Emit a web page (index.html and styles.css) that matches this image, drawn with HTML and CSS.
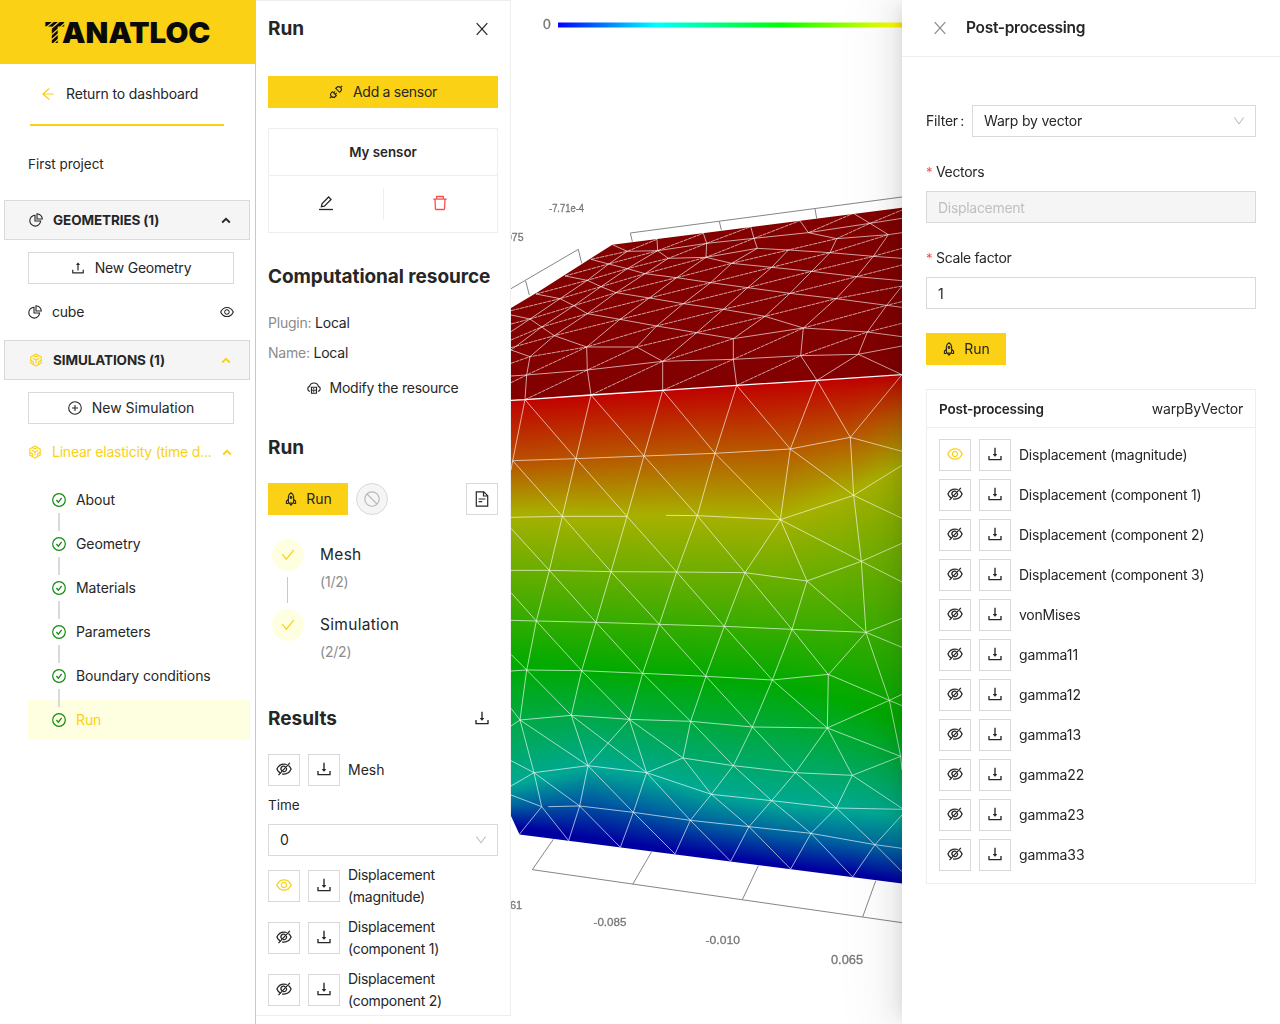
FILE: index.html
```html
<!DOCTYPE html>
<html lang="en">
<head>
<meta charset="utf-8">
<title>Tanatloc</title>
<link rel="stylesheet" href="styles.css">
</head>
<body>
<svg class="defs" aria-hidden="true">
  <symbol id="arrow-left" viewBox="64 64 896 896"><path d="M872 474H286.9l350.2-304c5.6-4.9 2.2-14-5.2-14h-88.5c-3.9 0-7.6 1.4-10.5 3.9L155 487.8a31.96 31.96 0 000 48.3L535.1 866c1.5 1.3 3.3 2 5.2 2h91.5c7.4 0 10.8-9.2 5.2-14L286.9 550H872c4.4 0 8-3.6 8-8v-60c0-4.4-3.6-8-8-8z"/></symbol>
  <symbol id="down" viewBox="64 64 896 896"><path d="M884 256h-75c-5.1 0-9.9 2.5-12.9 6.6L512 654.2 227.9 262.6c-3-4.1-7.8-6.6-12.9-6.6h-75c-6.5 0-10.3 7.4-6.5 12.7l352.6 486.1c12.8 17.6 39 17.6 51.7 0l352.6-486.1c3.9-5.3.1-12.7-6.4-12.7z"/></symbol>
  <symbol id="check" viewBox="64 64 896 896"><path d="M912 190h-69.9c-9.8 0-19.1 4.5-25.1 12.2L404.7 724.5 207 474a32 32 0 00-25.1-12.2H112c-6.7 0-10.4 7.7-6.3 12.9l273.9 347c12.8 16.2 37.4 16.2 50.3 0l488.4-618.9c4.1-5.1.4-12.8-6.3-12.8z"/></symbol>
  <symbol id="delete" viewBox="64 64 896 896"><path d="M360 184h-8c4.4 0 8-3.6 8-8v8h304v-8c0 4.4 3.6 8 8 8h-8v72h72v-80c0-35.3-28.7-64-64-64H352c-35.3 0-64 28.7-64 64v80h72v-72zm504 72H160c-17.7 0-32 14.3-32 32v32c0 4.4 3.6 8 8 8h60.4l24.7 523c1.6 34.1 29.8 61 63.9 61h454c34.2 0 62.3-26.8 63.9-61l24.7-523H888c4.4 0 8-3.6 8-8v-32c0-17.7-14.3-32-32-32zM731.3 840H292.7l-24.2-512h487l-24.2 512z"/></symbol>
  <symbol id="eye" viewBox="64 64 896 896"><path d="M942.2 486.2C847.4 286.5 704.1 186 512 186c-192.2 0-335.4 100.5-430.2 300.3a60.3 60.3 0 000 51.5C176.6 737.5 319.9 838 512 838c192.2 0 335.4-100.5 430.2-300.3 7.7-16.2 7.7-35 0-51.5zM512 766c-161.3 0-279.4-81.8-362.7-254C232.6 339.8 350.7 258 512 258c161.3 0 279.4 81.8 362.7 254C791.5 684.2 673.4 766 512 766zm-4-430c-97.2 0-176 78.8-176 176s78.8 176 176 176 176-78.8 176-176-78.8-176-176-176zm0 288c-61.9 0-112-50.1-112-112s50.1-112 112-112 112 50.1 112 112-50.1 112-112 112z"/></symbol>
  <symbol id="eye-off" viewBox="0 0 16 16"><g fill="none" stroke="currentColor" stroke-width="1.250"><path d="M4.600 12.100C2.900 11.300 1.600 9.900.9 8 2.300 4.700 4.800 3 8 3q1.500 0 2.800.5M12.500 4.400Q14.200 5.700 15.100 8C13.700 11.300 11.200 13 8 13q-1 0-1.900-.2"/><path d="M5.900 9.700A2.600 2.600 0 0 1 9.300 5.700M10.400 7A2.600 2.600 0 0 1 7 10.400M2.500 14.200L13.900 1.800"/></g></symbol>
  <symbol id="download" viewBox="64 64 896 896"><path d="M505.7 661a8 8 0 0012.6 0l112-141.7c4.1-5.2.4-12.9-6.3-12.9h-74.1V168c0-4.4-3.6-8-8-8h-60c-4.4 0-8 3.6-8 8v338.3H400c-6.7 0-10.4 7.7-6.3 12.9l112 141.8zM878 626h-60c-4.4 0-8 3.6-8 8v154H214V634c0-4.4-3.6-8-8-8h-60c-4.4 0-8 3.6-8 8v198c0 17.7 14.3 32 32 32h684c17.7 0 32-14.3 32-32V634c0-4.4-3.6-8-8-8z"/></symbol>
  <symbol id="upload" viewBox="64 64 896 896"><path d="M400 317.7h73.9V656c0 4.4 3.6 8 8 8h60c4.4 0 8-3.6 8-8V317.7H624c6.7 0 10.4-7.7 6.3-12.9L518.3 163a8 8 0 00-12.6 0l-112 141.7c-4.1 5.3-.4 13 6.3 13zM878 626h-60c-4.4 0-8 3.6-8 8v154H214V634c0-4.4-3.6-8-8-8h-60c-4.4 0-8 3.6-8 8v198c0 17.7 14.3 32 32 32h684c17.7 0 32-14.3 32-32V634c0-4.4-3.6-8-8-8z"/></symbol>
  <symbol id="pie" viewBox="0 0 14 14"><g fill="none" stroke="currentColor" stroke-width="1.1"><path d="M6 2.3A5.4 5.4 0 1 0 11.6 8H6z"/><path d="M8 .7V6h5.3A5.4 5.4 0 0 0 8 .7z"/></g></symbol>
  <symbol id="cube" viewBox="0 0 14 14"><g fill="none" stroke="currentColor" stroke-width="1.1" stroke-linejoin="round"><path d="M7 1l5.2 2.9v6.2L7 13l-5.200-2.900V3.900z"/><path d="M3.800 5.200L7 7l3.200-1.800M7 7v3.600M4.300 2.500L7 4l2.700-1.500M1.800 7.200l2.500 1.500v2.800M12.200 7.200L9.700 8.700v2.800"/></g></symbol>
  <symbol id="plus-circle" viewBox="0 0 14 14"><g fill="none" stroke="currentColor" stroke-width="1.1"><circle cx="7" cy="7" r="6.300"/><path d="M7 4v6M4 7h6"/></g></symbol>
  <symbol id="check-circle" viewBox="0 0 14 14"><g fill="none" stroke="currentColor" stroke-width="1.2"><circle cx="7" cy="7" r="6.300"/><path d="M4.400 7l1.900 2.200L9.700 4.800"/></g></symbol>
  <symbol id="caret" viewBox="0 0 10 10"><path d="M1.200 7.500L5 3.800 8.800 7.500" fill="none" stroke="currentColor" stroke-width="1.900"/></symbol>
  <symbol id="close" viewBox="0 0 16 16"><path d="M2.700 2.200L13.300 13.800M13.300 2.200L2.700 13.800" fill="none" stroke="currentColor" stroke-width="1.250"/></symbol>
  <symbol id="plug" viewBox="0 0 14 14"><g fill="none" stroke="currentColor" stroke-width="1.150"><path d="M.8 13.200L2.600 11.400M13.200.8L11.400 2.600"/><path d="M3.400 6.700l3.900 3.900-.9.900a2.750 2.750 0 0 1-3.900-3.900zM6.700 3.400l3.900 3.900.9-.9a2.750 2.750 0 0 0-3.900-3.900zM4.600 7.800l1.500-1.500M6.200 9.400l1.500-1.500"/></g></symbol>
  <symbol id="edit" viewBox="0 0 16 16"><g fill="none" stroke="currentColor" stroke-width="1.300"><path d="M3.400 11.700l.6-3L10.600 2l2.400 2.400L6.400 11.100z"/><path d="M1 14.500h14"/></g></symbol>
  <symbol id="rocket" viewBox="0 0 14 14"><g fill="none" stroke="currentColor" stroke-width="1.100"><path d="M4.400 11V4.500Q4.800 2.200 7 .8q2.200 1.400 2.600 3.700V11zM4.400 7L2.400 9.300V11.500h2M9.600 7l2 2.300v2.200h-2M5.300 11.200L7 13.200l1.700-2"/><circle cx="7" cy="5.500" r=".9"/></g></symbol>
  <symbol id="cloud" viewBox="0 0 14 14"><g fill="none" stroke="currentColor" stroke-width="1.150"><path d="M2.900 10.500C-.1 9.500.2 6 2.600 5.400 3.600.9 10.400.9 11.400 5.400c2.400.6 2.700 4.100-.3 5.100"/><path d="M4.500 6.200h5v6h-5zM4.500 9.200h5M6 7.700h1.200M6 10.700h1.200"/></g></symbol>
  <symbol id="stop" viewBox="0 0 16 16"><g fill="none" stroke="currentColor" stroke-width="1.150"><circle cx="8" cy="8" r="7.200"/><path d="M3 3l10 10"/></g></symbol>
  <symbol id="file" viewBox="0 0 16 16"><g fill="none" stroke="currentColor" stroke-width="1.200"><path d="M2.300 .8h7.500l3.900 3.900v10.500H2.300zM9.500 1v4h4M4.600 8h6.800M4.600 10.700h3.600"/></g></symbol>
</svg>

<div class="app">
  <aside class="sidebar">
    <header class="brand">
      <svg class="logo" viewBox="0 0 256 64" role="img" aria-label="Tanatloc">
        <text x="44.500" y="42.500" textLength="166" lengthAdjust="spacingAndGlyphs">TANATLOC</text>
        <path d="M43 30L54 21M46 33L60 21M49 37L65 23M49 42L65 28M52 45L65 33" stroke="#fad114" stroke-width="1.100"/>
      </svg>
    </header>
    <div class="return"><svg class="i14 gold"><use href="#arrow-left"/></svg><span>Return to dashboard</span></div>
    <div class="rule"></div>
    <div class="project">First project</div>
    <div class="section"><svg class="i14"><use href="#pie"/></svg><b>GEOMETRIES (1)</b><svg class="i10"><use href="#caret"/></svg></div>
    <button class="btn wide"><svg class="i14"><use href="#upload"/></svg><span class="snug">New Geometry</span></button>
    <div class="item"><svg class="i14"><use href="#pie"/></svg><span class="snug">cube</span><svg class="i14"><use href="#eye"/></svg></div>
    <div class="section"><svg class="i14 gold"><use href="#cube"/></svg><b>SIMULATIONS (1)</b><svg class="i10 gold"><use href="#caret"/></svg></div>
    <button class="btn wide"><svg class="i14"><use href="#plus-circle"/></svg>New Simulation</button>
    <div class="item gold sim"><svg class="i14"><use href="#cube"/></svg><span>Linear elasticity (time d...</span><svg class="i10"><use href="#caret"/></svg></div>
    <nav class="menu">
      <div><svg class="i14 ok"><use href="#check-circle"/></svg>About</div>
      <div><svg class="i14 ok"><use href="#check-circle"/></svg>Geometry</div>
      <div><svg class="i14 ok"><use href="#check-circle"/></svg>Materials</div>
      <div><svg class="i14 ok"><use href="#check-circle"/></svg>Parameters</div>
      <div><svg class="i14 ok"><use href="#check-circle"/></svg>Boundary conditions</div>
      <div class="active"><svg class="i14 ok"><use href="#check-circle"/></svg>Run</div>
    </nav>
  </aside>

  <section class="panel">
    <div class="head"><h2>Run</h2><svg class="i16"><use href="#close"/></svg></div>
    <button class="btn primary add"><svg class="i14"><use href="#plug"/></svg>Add a sensor</button>
    <div class="sensor">
      <div class="name">My sensor</div>
      <div class="actions"><span><svg class="i16"><use href="#edit"/></svg></span><span><svg class="i16 red"><use href="#delete"/></svg></span></div>
    </div>
    <h2 class="h-res">Computational resource</h2>
    <p class="kv"><i>Plugin:</i> Local</p>
    <p class="kv"><i>Name:</i> Local</p>
    <div class="modify"><svg class="i14"><use href="#cloud"/></svg>Modify the resource</div>
    <h2 class="h-run">Run</h2>
    <div class="runbar">
      <button class="btn primary run"><svg class="i14"><use href="#rocket"/></svg>Run</button>
      <span class="stop"><svg class="i16"><use href="#stop"/></svg></span>
      <button class="sq"><svg class="i16"><use href="#file"/></svg></button>
    </div>
    <div class="steps">
      <div class="step"><span class="dot"><svg class="i14"><use href="#check"/></svg></span><div><div class="st">Mesh</div><div class="sd">(1/2)</div></div></div>
      <div class="step"><span class="dot"><svg class="i14"><use href="#check"/></svg></span><div><div class="st">Simulation</div><div class="sd">(2/2)</div></div></div>
    </div>
    <div class="results"><h2>Results</h2><svg class="i16"><use href="#download"/></svg></div>
    <div class="row"><button class="sq"><svg class="i16"><use href="#eye-off"/></svg></button><button class="sq"><svg class="i16"><use href="#download"/></svg></button><span>Mesh</span></div>
    <div class="time">Time</div>
    <div class="select"><span>0</span><svg class="i12"><use href="#down"/></svg></div>
    <div class="tall">
      <div class="row"><button class="sq gold"><svg class="i16"><use href="#eye"/></svg></button><button class="sq"><svg class="i16"><use href="#download"/></svg></button><span>Displacement<br>(magnitude)</span></div>
      <div class="row"><button class="sq"><svg class="i16"><use href="#eye-off"/></svg></button><button class="sq"><svg class="i16"><use href="#download"/></svg></button><span>Displacement<br>(component 1)</span></div>
      <div class="row"><button class="sq"><svg class="i16"><use href="#eye-off"/></svg></button><button class="sq"><svg class="i16"><use href="#download"/></svg></button><span>Displacement<br>(component 2)</span></div>
    </div>
  </section>

  <main class="view">
    <canvas id="shade" width="391" height="1024"></canvas>
    <svg class="mesh" viewBox="511 0 391 1024">
      <defs><linearGradient id="bar" gradientUnits="userSpaceOnUse" x1="558" x2="1004" y1="0" y2="0"><stop offset="0" stop-color="#00f"/><stop offset=".22" stop-color="#0ff"/><stop offset=".5" stop-color="#0f0"/><stop offset=".75" stop-color="#ff0"/><stop offset="1" stop-color="#f00"/></linearGradient></defs>
      <rect x="558" y="22.500" width="344" height="5" fill="url(#bar)"/>
      <g transform="translate(510 180) scale(.33333)">
        <path class="axis" d="M367 185L361 159L1176 51M634 150L628 124M920 115L915 86M3 326L205 208L215 250M58 345L47 303"/>
        <path fill="#820000" d="M3 384L85 335L307 194L1176 83V584L3 661z"/>
        <g class="wire top">
          <path d="M307 194L352 214L443 212L475 235L588 232L665 250L785 262L905 274L1040 290L1176 302M243 238L296 252L352 266L405 281L500 293L602 308L713 323L840 340L978 356L1130 376L1176 382M165 288L232 301L273 320L318 338L418 354L520 371L640 388L765 409L880 444L1072 456L1176 470M78 342L150 356L192 377L232 401L330 418L440 438L560 458L670 476L880 444M3 405L60 417L95 441L133 467L230 501L380 501L458 544M3 510L60 530M3 588L50 585L232 570L458 544L670 538L872 527L1045 523L1176 498"/>
          <path d="M588 232L590 190L580 160M443 212L441 178M742 205L732 175L722 140M443 212L590 190L732 175L895 158L980 176L1135 164L1176 158M870 122L895 158L1080 130L1176 115M1030 100L1080 130L1135 164L1090 229L1040 290L978 356L880 444L872 527L921 601M588 232L742 205L835 210L960 218L1090 229L1176 235"/>
          <path d="M980 176L960 218L905 274L840 340L765 409L670 476L670 538L680 616M835 210L785 262L713 323L640 388L560 458L458 544V631M742 205L665 250L602 308L520 371L440 438L380 501M588 232L500 293L418 354L330 418L230 501L232 570L243 645M475 235L405 281L318 338L232 401L133 467L60 530L50 585L45 659M443 212L352 266L273 320L192 377L95 441L3 510M352 214L296 252L232 301L150 356L60 417L3 455M1176 318L1130 376L1072 456L1045 523L921 601M1045 523L1176 584"/>
          <path class="dash" d="M352 214L441 178M443 212L580 160M590 190L722 140M732 175L870 122M895 158L1030 100M1080 130L1176 90M243 238L352 214M165 288L296 252L443 212M78 342L232 301L352 266L475 235L590 190M3 392L150 356L273 320L405 281L588 232L732 175M3 432L60 417L192 377L318 338L500 293L665 250L835 210L980 176L1080 130M3 480L95 441L232 401L418 354L602 308L785 262L960 218L1135 164M3 503L133 467L330 418L520 371L713 323L905 274L1090 229L1176 205M3 550L60 530L230 501L440 438L640 388L840 340L1040 290L1176 255M3 608L50 585L230 501M45 659L232 570L380 501L560 458L765 409L978 356L1176 318M243 645L458 544L670 476M458 631L670 538L880 444L1130 376L1176 365M680 616L872 527L1072 456L1176 430"/>
        </g>
        <path class="edge" d="M3 661L45 659L243 645L458 631L680 616L921 601L1176 584"/>
      </g>
      <g class="wire" transform="translate(510 400) scale(.33333)">
        <path d="M8 182L198 176L402 168L615 160L841 147L1021 112L1176 154M3 352L157 349H351M468 346L562 347L811 359L1031 286L1176 196M1031 286L1176 355M3 511H118L303 515L500 516L705 518L891 543L1054 484L1176 430M1054 484L1176 546M3 661L79 663L258 667L448 673L643 679L846 688L1068 697L1176 655M1068 697L1176 742"/>
        <path d="M45-1L8 182L3 210M243-15L198 176L157 349L118 511L79 663L50 812M458-29L402 168L351 349L303 515L258 667L215 812M680-44L615 160L562 347L500 516L448 673L398 820M921-59L841 147L811 359L705 518L643 679L587 829M1176-76L1021 112L1031 286L1054 484L1068 697L1138 901M811 359L891 543L846 688L787 840M841 147L1031 286M811 359L1054 484M891 543L1068 697L955 824"/>
        <path d="M45-1L198 176L351 349L500 516L643 679L787 840M243-15L402 168L562 347L705 518L846 688L955 824M458-29L615 160L811 359M680-44L841 147M921-59L1021 112M8 182L157 349L303 515L448 673L588 829M3 385L118 511L258 667L398 820M3 578L79 663L215 812M3 763L50 810"/>
      </g>
      <g transform="translate(510 640) scale(.33333)">
        <g class="wire">
          <path d="M3 93L50 90L215 92L398 100L588 109L787 120L955 103L1138 181L1176 163M1138 181L1176 197M3 205L30 240L3 258M30 240L184 226L358 238L542 244L727 261L952 264L1138 181M955 103L952 264L1172 349M3 438L72 398L234 377L410 398L519 354L670 377L856 398L1027 406L1172 349L1138 181M1172 349L1176 390M3 465L95 500M115 500L209 498L370 517L541 541L717 560L903 580L1095 614L1176 625M410 398L604 463L785 482L979 504L1176 508M1027 406L1176 505"/>
          <path d="M50 90L30 240L72 398L95 500L28 583M95 500L176 602L209 498L331 622L370 517L495 642L541 541L662 664L717 560L842 687L903 580L1028 711L1095 614L1176 525M1095 614L1176 695M215 92L184 226L234 377L209 498M398 100L358 238L410 398L370 517M588 109L542 244L519 354M787 120L727 261L670 377L604 463L541 541M952 264L856 398L785 482L717 560M952 264L1027 406L979 504L903 580"/>
          <path d="M50 90L184 226L410 398L541 541M234 377L358 238M30 240L234 377L370 517M215 92L358 238L519 354L604 463L717 560M398 100L542 244L670 377L785 482L903 580M588 109L727 261L856 398L979 504L1095 614M787 120L952 264M72 398L209 498M3 362L72 398"/>
        </g>
        <path class="axis" d="M130 598L67 689L1176 848M425 635L368 733M745 677L697 779M1097 723L1058 831"/>
      </g>
      <g class="labels">
        <text x="543" y="29" font-size="14">0</text>
        <text x="549" y="212" font-size="10" textLength="35" lengthAdjust="spacingAndGlyphs">-7.71e-4</text>
        <text x="506" y="241" font-size="10.500">075</text>
        <text x="510" y="909" font-size="11">61</text>
        <text x="593.500" y="925.500" font-size="11.500" textLength="33" lengthAdjust="spacingAndGlyphs">-0.085</text>
        <text x="705.500" y="944" font-size="11.500" textLength="34.500" lengthAdjust="spacingAndGlyphs">-0.010</text>
        <text x="831" y="964" font-size="12" textLength="32" lengthAdjust="spacingAndGlyphs">0.065</text>
      </g>
    </svg>
  </main>

  <aside class="drawer">
    <header><svg class="i16"><use href="#close"/></svg><h3>Post-processing</h3></header>
    <div class="form">
      <div class="filter"><label>Filter&#8201;:</label><div class="select"><span>Warp by vector</span><svg class="i12"><use href="#down"/></svg></div></div>
      <label class="lab"><em>*</em>Vectors</label>
      <div class="input off">Displacement</div>
      <label class="lab"><em>*</em>Scale factor</label>
      <div class="input">1</div>
      <button class="btn primary run"><svg class="i14"><use href="#rocket"/></svg>Run</button>
      <div class="card">
        <div class="card-head"><b>Post-processing</b><span>warpByVector</span></div>
        <div class="card-body">
          <div class="row"><button class="sq gold"><svg class="i16"><use href="#eye"/></svg></button><button class="sq"><svg class="i16"><use href="#download"/></svg></button><span>Displacement (magnitude)</span></div>
          <div class="row"><button class="sq"><svg class="i16"><use href="#eye-off"/></svg></button><button class="sq"><svg class="i16"><use href="#download"/></svg></button><span>Displacement (component 1)</span></div>
          <div class="row"><button class="sq"><svg class="i16"><use href="#eye-off"/></svg></button><button class="sq"><svg class="i16"><use href="#download"/></svg></button><span>Displacement (component 2)</span></div>
          <div class="row"><button class="sq"><svg class="i16"><use href="#eye-off"/></svg></button><button class="sq"><svg class="i16"><use href="#download"/></svg></button><span>Displacement (component 3)</span></div>
          <div class="row"><button class="sq"><svg class="i16"><use href="#eye-off"/></svg></button><button class="sq"><svg class="i16"><use href="#download"/></svg></button><span>vonMises</span></div>
          <div class="row"><button class="sq"><svg class="i16"><use href="#eye-off"/></svg></button><button class="sq"><svg class="i16"><use href="#download"/></svg></button><span class="loose">gamma11</span></div>
          <div class="row"><button class="sq"><svg class="i16"><use href="#eye-off"/></svg></button><button class="sq"><svg class="i16"><use href="#download"/></svg></button><span class="loose">gamma12</span></div>
          <div class="row"><button class="sq"><svg class="i16"><use href="#eye-off"/></svg></button><button class="sq"><svg class="i16"><use href="#download"/></svg></button><span class="loose">gamma13</span></div>
          <div class="row"><button class="sq"><svg class="i16"><use href="#eye-off"/></svg></button><button class="sq"><svg class="i16"><use href="#download"/></svg></button><span class="loose">gamma22</span></div>
          <div class="row"><button class="sq"><svg class="i16"><use href="#eye-off"/></svg></button><button class="sq"><svg class="i16"><use href="#download"/></svg></button><span class="loose">gamma23</span></div>
          <div class="row"><button class="sq"><svg class="i16"><use href="#eye-off"/></svg></button><button class="sq"><svg class="i16"><use href="#download"/></svg></button><span class="loose">gamma33</span></div>
        </div>
      </div>
    </div>
  </aside>
</div>
<script src="shade.js"></script>
</body>
</html>
```

FILE: styles.css
```css
* { box-sizing: border-box; }
body { margin: 0; font: 14px/22px Inter, "Liberation Sans", sans-serif; color: #262626; background: #fff; overflow: hidden; }
h2, h3, p { margin: 0; }
button { font: inherit; color: inherit; padding: 0; }
svg { fill: currentColor; flex: none; }
.defs { position: absolute; width: 0; height: 0; }
.i10 { width: 10px; height: 10px; }
.i12 { width: 12px; height: 12px; }
.i14 { width: 14px; height: 14px; }
.i16 { width: 16px; height: 16px; }
.gold { color: #fad114; }
.red { color: #ff4d4f; }
.ok { color: #118a11; }

.app { display: flex; width: 1280px; height: 1024px; }

/* sidebar */
.sidebar { width: 256px; flex: none; border-right: 1px solid #fad114; }
.brand { height: 64px; width: 256px; background: #fad114; }
.logo { display: block; width: 256px; height: 64px; }
.logo text { font: 900 28.500px Inter, sans-serif; fill: #0a0a0a; }
.return { display: flex; align-items: center; height: 60px; padding-left: 41px; gap: 11px; letter-spacing: -.15px; }
.rule { height: 2px; width: 194px; margin-left: 30px; background: #fad114; }
.project { height: 74px; padding: 27px 0 0 28px; font-size: 13.500px; letter-spacing: -.03px; }
.section { display: flex; align-items: center; height: 40px; width: 246px; margin-left: 4px; padding: 0 18px 0 24px; border: 1px solid #d9d9d9; background: #f5f5f5; font-size: 13.500px; letter-spacing: -.1px; }
.section b { flex: 1; margin-left: 10px; font-weight: 700; }
.btn { display: flex; align-items: center; justify-content: center; gap: 10px; height: 32px; border: 1px solid #d9d9d9; background: #fff; }
.btn.wide { width: 206px; margin: 12px 0 0 28px; }
.btn.primary { border-color: #fad114; background: #fad114; }
.snug { letter-spacing: -.22px; }
.item { display: flex; align-items: center; height: 56px; padding: 0 21px 0 28px; }
.item span { flex: 1; margin-left: 10px; }
.sim { padding-right: 23px; letter-spacing: -.23px; }
.menu { display: flex; flex-direction: column; gap: 4px; letter-spacing: -.1px; }
.menu div { position: relative; display: flex; align-items: center; gap: 10px; height: 40px; width: 222px; margin-left: 28px; padding-left: 24px; }
.menu .active { background: #feffe0; color: #fad114; }
.menu div:not(.active)::after { content: ""; position: absolute; z-index: 1; left: 30px; top: 33px; width: 2px; height: 18px; background: #d9d9d9; }

/* run panel */
.panel { width: 255px; height: 1016px; flex: none; padding: 0 12px; border: solid #eee; border-width: 1px 1px 1px 0; }
h2 { font-size: 19px; line-height: 28px; font-weight: 700; letter-spacing: 0; }
.head { display: flex; align-items: center; justify-content: space-between; height: 56px; padding-right: 8px; }
.add { width: 230px; margin-top: 19px; letter-spacing: -.28px; }
.sensor { width: 230px; height: 105px; margin-top: 20px; border: 1px solid #eee; }
.sensor .name { height: 47px; line-height: 47px; text-align: center; font-weight: 600; font-size: 13.300px; border-bottom: 1px solid #eee; }
.actions { display: flex; padding-top: 12px; }
.actions span { flex: 1; display: flex; justify-content: center; align-items: center; height: 32px; }
.actions span:first-child { border-right: 1px solid #eee; }
.actions svg { margin-top: -3px; }
.h-res { margin: 30px 0 20px; white-space: nowrap; letter-spacing: -.06px; }
.kv { height: 30px; line-height: 23px; letter-spacing: -.22px; }
.kv i { font-style: normal; color: #8c8c8c; }
.modify { display: flex; align-items: center; justify-content: center; gap: 8px; height: 32px; margin-top: 1px; letter-spacing: -.23px; }
.h-run { margin-top: 30px; }
.runbar { display: flex; align-items: center; gap: 8px; margin-top: 21px; }
.run { width: 80px; gap: 8px; }
.stop { display: flex; align-items: center; justify-content: center; width: 32px; height: 32px; border: 1px solid #d9d9d9; border-radius: 50%; background: #f5f5f5; color: #b8b8b8; }
.runbar .sq { margin-left: auto; }
.sq { display: flex; align-items: center; justify-content: center; width: 32px; height: 32px; flex: none; border: 1px solid #d9d9d9; background: #fff; }
.steps { padding: 24px 0 0 4px; height: 166px; }
.step { position: relative; display: flex; gap: 16px; height: 70px; }
.step:first-child::after { content: ""; position: absolute; left: 15px; top: 38px; width: 1px; height: 26px; background: #fad114; }
.dot { display: flex; align-items: center; justify-content: center; width: 32px; height: 32px; border-radius: 50%; background: #feffe0; color: #fad114; }
.st { font-size: 15.500px; line-height: 32px; letter-spacing: .3px; }
.sd { color: #8c8c8c; line-height: 22px; letter-spacing: -.2px; }
.results { display: flex; align-items: center; justify-content: space-between; height: 73px; padding: 1px 8px 0 0; }
.results h2 { padding-top: 2px; }
.row { display: flex; align-items: center; height: 32px; gap: 8px; }
.row .sq svg { transform: translateY(-1px); }
.time { height: 38px; padding-top: 8px; letter-spacing: -.05px; font-size: 13.500px; }
.select { display: flex; align-items: center; justify-content: space-between; height: 32px; padding: 0 10px 0 11px; border: 1px solid #d9d9d9; }
.select svg { color: #bfbfbf; }
.tall { display: flex; flex-direction: column; gap: 8px; padding-top: 8px; letter-spacing: -.28px; }
.tall .row { height: 44px; }

/* 3D view */
.view { position: relative; flex: 1; overflow: hidden; }
.view canvas, .mesh { position: absolute; left: 0; top: 0; width: 391px; height: 1024px; }
.mesh path { stroke-linejoin: round; }
.axis { fill: none; stroke: #858585; stroke-width: 3; }
.wire { fill: none; stroke: #fff; stroke-opacity: .65; stroke-width: 2.900; }
.dash { stroke-dasharray: 12 2; }
.edge { fill: none; stroke: #fff; stroke-width: 4; }
.labels { font-family: "Liberation Sans", Arial, sans-serif; fill: #777; stroke: #777; stroke-width: .3; }

/* drawer */
.drawer { position: relative; width: 378px; flex: none; background: #fff; box-shadow: -6px 0 16px -8px rgba(0,0,0,.1), -9px 0 28px 0 rgba(0,0,0,.08), -12px 0 48px 16px rgba(0,0,0,.035); }
.drawer header { display: flex; align-items: center; gap: 18px; height: 57px; padding-left: 30px; border-bottom: 1px solid #eee; color: #8c8c8c; }
h3 { color: #262626; font-size: 15.500px; line-height: 22px; font-weight: 600; letter-spacing: -.3px; }
.form { padding: 48px 24px 0; }
.filter { display: flex; align-items: center; justify-content: space-between; }
.filter label { letter-spacing: -.2px; white-space: nowrap; }
.filter .select { width: 284px; flex: none; letter-spacing: -.2px; }
.lab { display: block; margin-top: 24px; height: 30px; letter-spacing: -.33px; }
.lab em { display: inline-block; width: 10px; font-style: normal; color: #ff4d4f; font-size: 13px; }
.input { height: 32px; padding: 0 11px; line-height: 31px; border: 1px solid #d9d9d9; letter-spacing: -.3px; }
.input.off { background: #f5f5f5; color: #bfbfbf; }
.form > .run { margin-top: 24px; }
.card { margin-top: 24px; height: 495px; border: 1px solid #eee; }
.card-head { display: flex; justify-content: space-between; height: 38px; line-height: 38px; padding: 0 12px; border-bottom: 1px solid #eee; letter-spacing: -.2px; }
.card-head b { font-weight: 600; font-size: 13.500px; }
.card-body { display: flex; flex-direction: column; gap: 8px; padding: 11px 12px; letter-spacing: -.24px; }
.loose { letter-spacing: -.1px; }
```

FILE: shade.js
```js
// Colour field of the front face: one vertical gradient per pixel column,
// with the iso-level heights interpolated between sampled columns.
const colours = ['#c00000', '#b85200', '#a8b000', '#00aa00', '#00a893', '#0062a0', '#0000a0'];
const columns = [
  [0, 400, 463, 513, 665, 785, 806, 826],
  [79, 394, 455, 515, 670, 767, 797, 838],
  [134, 391, 451, 515, 675, 776, 808, 846],
  [199, 387, 447, 516, 678, 793, 823, 855],
  [269, 382, 445, 517, 684, 804, 834, 865],
  [339, 378, 433, 492, 702, 810, 843, 873],
  [391, 374, 412, 466, 722, 818, 851, 882]
];
const ctx = document.getElementById('shade').getContext('2d');
ctx.beginPath();
ctx.moveTo(0, 400);
ctx.lineTo(391, 374);
ctx.lineTo(391, 883.5);
ctx.lineTo(8.5, 834.5);
ctx.lineTo(0, 816);
ctx.clip();
for (let x = 0; x < 391; x++) {
  let k = 0;
  while (x >= columns[k + 1][0]) k++;
  const a = columns[k], b = columns[k + 1];
  const t = (x - a[0]) / (b[0] - a[0]);
  const ys = a.slice(1).map((y, i) => y + (b[i + 1] - y) * t);
  const top = ys[0], span = ys[6] - top;
  const g = ctx.createLinearGradient(0, top, 0, top + span);
  ys.forEach((y, i) => g.addColorStop((y - top) / span, colours[i]));
  ctx.fillStyle = g;
  ctx.fillRect(x, 370, 1, 520);
}
```
